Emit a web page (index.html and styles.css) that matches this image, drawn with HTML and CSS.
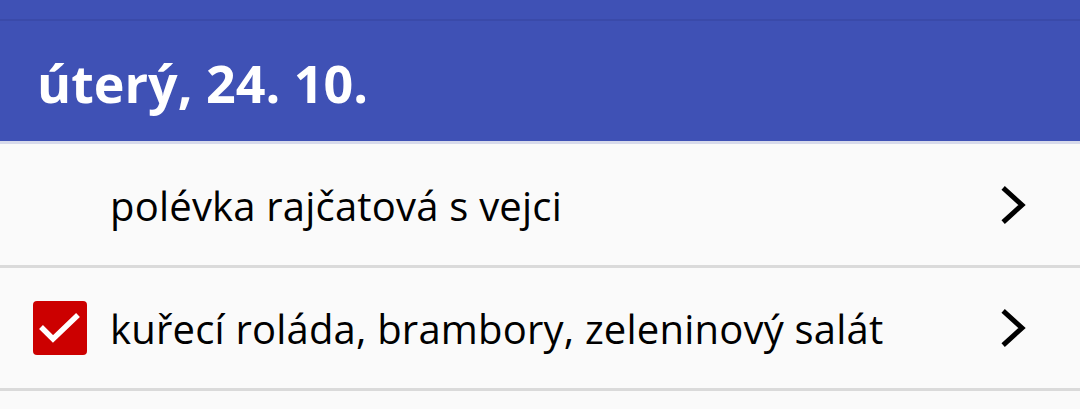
FILE: index.html
```html
<!DOCTYPE html>
<html lang="cs">
<head>
<meta charset="utf-8">
<title>Jídelníček</title>
<link rel="stylesheet" href="styles.css">
</head>
<body>
<div class="appbar"></div>
<header class="day">
  <h1 class="day-title">úterý, 24. 10.</h1>
</header>
<ul class="menu">
  <li class="item">
    <span class="check-slot"></span>
    <span class="label">polévka rajčatová s vejci</span>
    <svg class="chevron" viewBox="0 0 30 40" width="30" height="40"><path d="M5 4.5 L22 20 L5 35.5" fill="none" stroke="#000" stroke-width="5" stroke-linecap="square" stroke-linejoin="miter"/></svg>
  </li>
  <li class="item">
    <span class="check-slot checked">
      <svg viewBox="0 0 54 54" width="54" height="54"><path d="M8 26 L20 38 L45 14" fill="none" stroke="#fff" stroke-width="5.5" stroke-linecap="butt" stroke-linejoin="miter"/></svg>
    </span>
    <span class="label">kuřecí roláda, brambory, zeleninový salát</span>
    <svg class="chevron" viewBox="0 0 30 40" width="30" height="40"><path d="M5 4.5 L22 20 L5 35.5" fill="none" stroke="#000" stroke-width="5" stroke-linecap="square" stroke-linejoin="miter"/></svg>
  </li>
  <li class="item"></li>
</ul>
</body>
</html>
```
FILE: styles.css
```css
html, body {
  margin: 0;
  padding: 0;
  background: #fafafa;
  font-family: "Open Sans", "Noto Sans", sans-serif;
  overflow: hidden;
}
.appbar {
  height: 19px;
  background: #3f51b5;
  border-bottom: 2px solid #3a4aa9;
}
.day {
  height: 120px;
  background: #3f51b5;
  border-bottom: 3px solid #d7daeb;
  display: flex;
  align-items: center;
  padding-left: 37px;
}
.day-title {
  margin: 0;
  color: #fff;
  font-weight: 700;
  font-size: 52px;
  line-height: 1;
  padding-top: 4px;
}
.menu {
  list-style: none;
  margin: 0;
  padding: 0;
}
.item {
  height: 121px;
  display: flex;
  align-items: center;
  padding-left: 33px;
  padding-right: 50px;
  border-bottom: 3px solid #dadada;
  box-sizing: content-box;
}
.item + .item {
  height: 120px;
}
.check-slot {
  width: 54px;
  height: 54px;
  flex: none;
  margin-right: 23px;
  border-radius: 4px;
}
.check-slot.checked {
  background: #cc0000;
}
.check-slot svg {
  display: block;
}
.label {
  flex: 1;
  font-size: 40px;
  letter-spacing: 0.2px;
  line-height: 1;
  color: #000;
  padding-top: 2px;
}
.chevron {
  flex: none;
  display: block;
}
```
